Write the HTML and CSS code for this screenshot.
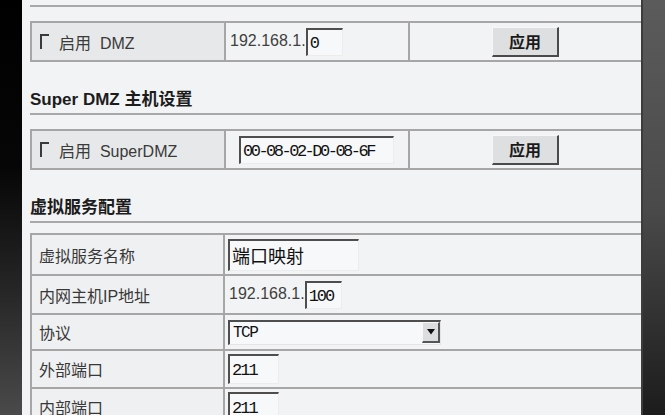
FILE: index.html
```html
<!DOCTYPE html>
<html lang="zh-CN">
<head>
<meta charset="utf-8">
<title>DMZ / 虚拟服务配置</title>
<link rel="stylesheet" href="styles.css">
</head>
<body>
<div class="screen">
  <div class="bezel-left"></div>
  <main class="page">
    <h2 class="title title-cut">DMZ 主机设置</h2>
    <table class="cfg">
      <colgroup><col class="c-label"><col class="c-mid"><col class="c-btn"></colgroup>
      <tr>
        <td class="cell-label"><span class="check"></span>启用&nbsp; DMZ</td>
        <td class="cell-value">192.168.1.<input class="field field-ip" type="text" value="0"></td>
        <td class="cell-btn"><button class="btn" type="button">应用</button></td>
      </tr>
    </table>

    <h2 class="title">Super DMZ 主机设置</h2>
    <table class="cfg">
      <colgroup><col class="c-label"><col class="c-mid"><col class="c-btn"></colgroup>
      <tr>
        <td class="cell-label"><span class="check"></span>启用&nbsp; SuperDMZ</td>
        <td class="cell-mac"><input class="field field-mac" type="text" value="00-08-02-D0-08-6F"></td>
        <td class="cell-btn"><button class="btn" type="button">应用</button></td>
      </tr>
    </table>

    <h2 class="title">虚拟服务配置</h2>
    <table class="cfg cfg-service">
      <colgroup><col class="c-label2"><col class="c-rest"></colgroup>
      <tr class="r-name">
        <td class="cell-label2">虚拟服务名称</td>
        <td class="cell-input"><input class="field field-name" type="text" value="端口映射"></td>
      </tr>
      <tr class="r-ip">
        <td class="cell-label2">内网主机IP地址</td>
        <td class="cell-value">192.168.1.<input class="field field-ip" type="text" value="100"></td>
      </tr>
      <tr class="r-proto">
        <td class="cell-label2">协议</td>
        <td class="cell-input">
          <span class="select-box">
            <select class="select"><option>TCP</option><option>UDP</option></select>
            <span class="select-arrow"><svg width="8" height="6" viewBox="0 0 8 6"><path d="M0 0H8L4 5.5Z" fill="#111"/></svg></span>
          </span>
        </td>
      </tr>
      <tr class="r-port">
        <td class="cell-label2">外部端口</td>
        <td class="cell-input"><input class="field field-port" type="text" value="211"></td>
      </tr>
      <tr class="r-port">
        <td class="cell-label2">内部端口</td>
        <td class="cell-input"><input class="field field-port" type="text" value="211"></td>
      </tr>
    </table>
  </main>
  <div class="bezel-right"></div>
</div>
</body>
</html>
```

FILE: styles.css
```css
* {
  box-sizing: border-box;
}

html,
body {
  margin: 0;
  height: 415px;
  overflow: hidden;
  background: #000;
}

body {
  font-family: "Liberation Sans", "Noto Sans CJK SC", sans-serif;
  color: #3a3a3a;
}

.screen {
  display: flex;
  height: 415px;
}

.bezel-left {
  flex: none;
  width: 22px;
  background: linear-gradient(to bottom, #000 0%, #060606 40%, #262626 70%, #4a4a4a 100%);
}

.bezel-right {
  flex: none;
  width: 24px;
  border-left: 2px solid #3c3c3c;
  background: linear-gradient(to bottom, #5b5b5b 0%, #4a4a4a 50%, #1c1c1c 100%);
}

.page {
  flex: none;
  width: 619px;
  padding-left: 8px;
  background: #f2f3f4;
  overflow: hidden;
}

.title {
  margin: 28px 0 0;
  font-size: 17px;
  line-height: 20px;
  font-weight: bold;
  color: #1c1c1c;
  padding-bottom: 3px;
  border-bottom: 2px solid #a8a8a8;
}

.title-cut {
  margin-top: -18px;
}

.cfg {
  width: 611px;
  margin-top: 14px;
  border-collapse: collapse;
  table-layout: fixed;
}

.cfg-service {
  margin-top: 10px;
}

.c-label { width: 194px; }
.c-mid { width: 184px; }
.c-btn { width: 233px; }
.c-label2 { width: 193px; }
.c-rest { width: 418px; }

.cfg td {
  border: 2px solid #a6a6a6;
  padding: 0;
  height: 39px;
  vertical-align: middle;
  font-size: 16px;
  white-space: nowrap;
}

.cfg .cell-label {
  background: #e7e8e9;
  padding-left: 8px;
  color: #3a3a3a;
}

.check {
  display: inline-block;
  width: 9px;
  height: 15px;
  border-top: 2px solid #3a3a3a;
  border-left: 2px solid #3a3a3a;
  margin-right: 10px;
}

.cfg .cell-value {
  padding-left: 4px;
  color: #404040;
}

.cfg .cell-mac {
  padding-left: 13px;
}

.cfg .cell-btn {
  text-align: center;
}

.cfg .cell-label2 {
  padding-left: 7px;
  background: #eff0f1;
  color: #383838;
}

.cfg .cell-input {
  padding-left: 3px;
}

.r-name td { height: 41px; }
.r-ip td { height: 39px; }
.r-proto td { height: 36px; }
.r-port td { height: 38px; }

.field {
  font-family: "Liberation Mono", monospace;
  font-size: 17px;
  letter-spacing: -2px;
  color: #111;
  background: #f7f8f9;
  border-style: solid;
  border-width: 2px 1px 1px 2px;
  border-color: #4e4e4e #ececec #ececec #4e4e4e;
  padding: 2px 0 0 2px;
  height: 28px;
  margin: 0;
  vertical-align: middle;
  outline: none;
}

.field-ip {
  width: 37px;
}

.field-mac {
  width: 155px;
  letter-spacing: -2.5px;
}

.field-name {
  width: 131px;
  height: 32px;
  font-family: "Noto Sans CJK SC", sans-serif;
  font-size: 18px;
  letter-spacing: 0;
  padding: 0 0 0 2px;
}

.field-port {
  width: 51px;
  height: 30px;
}

.btn {
  width: 67px;
  height: 30px;
  margin: 0;
  padding: 0;
  background: #dedfe0;
  border-style: solid;
  border-width: 1px 2px 2px 1px;
  border-color: #f7f7f7 #4a4a4a #4a4a4a #f7f7f7;
  font-family: "Noto Sans CJK SC", sans-serif;
  font-size: 16px;
  font-weight: bold;
  color: #1a1a1a;
  vertical-align: middle;
}

.select-box {
  display: inline-flex;
  align-items: center;
  width: 213px;
  height: 25px;
  vertical-align: middle;
  background: #f7f8f9;
  border-style: solid;
  border-width: 2px 1px 1px 2px;
  border-color: #4e4e4e #e4e4e4 #e4e4e4 #4e4e4e;
}

.select {
  flex: 1;
  min-width: 0;
  height: 100%;
  appearance: none;
  -webkit-appearance: none;
  border: none;
  background: transparent;
  font-family: "Liberation Mono", monospace;
  font-size: 16px;
  letter-spacing: -1.5px;
  color: #111;
  padding: 0 0 0 3px;
  margin: 0;
  outline: none;
}

.select-arrow {
  flex: none;
  display: flex;
  align-items: center;
  justify-content: center;
  width: 18px;
  height: 21px;
  background: #dcdddf;
  border-style: solid;
  border-width: 1px 2px 2px 1px;
  border-color: #f8f8f8 #555 #555 #f8f8f8;
}
```
